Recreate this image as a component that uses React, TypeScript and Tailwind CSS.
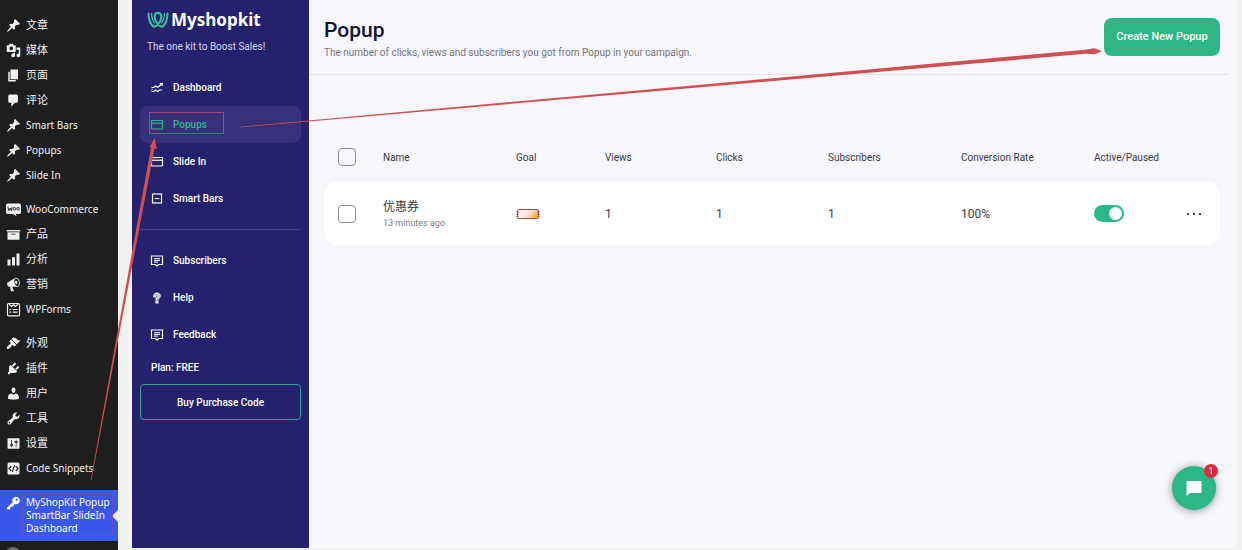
import { useState } from "react";
import type { ReactNode } from "react";
import { LiaQuestionSolid } from "react-icons/lia";

type IconProps = { children: ReactNode; className?: string };

const MenuIcon = ({ children, className = "fill-[#f0f0f1]" }: IconProps) => (
  <svg viewBox="0 0 20 20" className={`size-[15px] shrink-0 ${className}`} aria-hidden="true">
    {children}
  </svg>
);

const pin = (
  <path d="M10.44 3.02l1.82-1.82 6.36 6.35-1.83 1.82c-1.05-.68-2.48-.57-3.41.36l-.75.75c-.92.93-1.04 2.35-.35 3.41l-1.83 1.82-2.41-2.41-2.8 2.79c-.42.42-3.38 2.71-3.8 2.29s1.86-3.39 2.28-3.81l2.79-2.79L4.1 9.36l1.83-1.82c1.05.69 2.48.57 3.4-.36l.75-.75c.93-.92 1.05-2.35.36-3.41z" />
);

// WordPress admin menu, one array per separated group
const adminMenu: { label: string; icon: ReactNode }[][] = [
  [
    { label: "文章", icon: pin },
    {
      label: "媒体",
      icon: (
        <path d="M13 11V4c0-.55-.45-1-1-1h-1.67L9 1H5L3.67 3H2c-.55 0-1 .45-1 1v7c0 .55.45 1 1 1h10c.55 0 1-.45 1-1zM7 4.5c1.38 0 2.5 1.12 2.5 2.5S8.38 9.5 7 9.5 4.5 8.38 4.5 7 5.62 4.5 7 4.5zM14 6h5v10.5c0 1.38-1.12 2.5-2.5 2.5S14 17.88 14 16.5s1.12-2.5 2.5-2.5c.17 0 .34.02.5.05V9h-3V6zm-4 8.05V13h2v3.5c0 1.38-1.12 2.5-2.5 2.5S7 17.88 7 16.5 8.12 14 9.5 14c.17 0 .34.02.5.05z" />
      ),
    },
    { label: "页面", icon: <path d="M6 15V2h10v13H6zm-1 1h8v2H3V5h2v11z" /> },
    {
      label: "评论",
      icon: (
        <path d="M5 2h9c1.1 0 2 .9 2 2v7c0 1.1-.9 2-2 2h-2l-5 5v-5H5c-1.1 0-2-.9-2-2V4c0-1.1.9-2 2-2z" />
      ),
    },
    { label: "Smart Bars", icon: pin },
    { label: "Popups", icon: pin },
    { label: "Slide In", icon: pin },
  ],
  [
    {
      label: "WooCommerce",
      icon: (
        <>
          <path d="M2.5 2h15A2.5 2.5 0 0 1 20 4.5v9a2.5 2.5 0 0 1-2.5 2.5H13l1 3-5-3H2.5A2.5 2.5 0 0 1 0 13.5v-9A2.5 2.5 0 0 1 2.5 2z" />
          <path
            d="M2.5 6.5l1.3 5L5.6 8 7.2 11.5 8.2 6.5"
            fill="none"
            stroke="#1e1e1e"
            strokeWidth="1.2"
          />
          <circle cx="11.2" cy="9" r="1.7" fill="none" stroke="#1e1e1e" strokeWidth="1.2" />
          <circle cx="16" cy="9" r="1.7" fill="none" stroke="#1e1e1e" strokeWidth="1.2" />
        </>
      ),
    },
    { label: "产品", icon: <path d="M19 4v2H1V4h18zM2 7h16v10H2V7zm11 3V9H7v1h6z" /> },
    { label: "分析", icon: <path d="M18 18V2h-4v16h4zm-6 0V7H8v11h4zm-6 0v-8H2v8h4z" /> },
    {
      label: "营销",
      icon: (
        <path d="M18.15 5.94c.46 1.62.38 3.22-.02 4.48-.42 1.28-1.26 2.18-2.3 2.48-.16.06-.26.06-.4.06-.06.02-.12.02-.18.02-.06.02-.14.02-.22.02h-6.8l2.22 5.5c.02.14-.06.26-.14.34-.08.1-.24.16-.34.16H6.95c-.1 0-.26-.06-.34-.16-.08-.08-.16-.2-.14-.34l-1-5.5H4.25l-.02-.02c-.5.06-1.08-.18-1.54-.62s-.88-1.08-1.06-1.88c-.24-.8-.2-1.56-.02-2.2.18-.62.58-1.08 1.06-1.3l.02-.02 9-5.4c.1-.06.18-.1.24-.16.06-.04.14-.08.24-.12.16-.08.28-.12.5-.18 1.04-.3 2.24.1 3.22.98s1.84 2.24 2.26 3.86zm-2.58 5.98h-.02c.4-.1.74-.34 1.04-.7.58-.7.86-1.76.86-3.04 0-.64-.1-1.3-.28-1.98-.34-1.36-1.02-2.5-1.78-3.24s-1.68-1.1-2.46-.88c-.82.22-1.4.96-1.7 2-.32 1.04-.28 2.36.06 3.72.38 1.36 1 2.5 1.8 3.24.78.74 1.62 1.1 2.48.88zm-2.54-7.08c.22-.04.42-.02.62.04.38.16.76.48 1.02 1s.42 1.2.42 1.78c0 .3-.04.56-.12.8-.18.48-.44.84-.86.94-.34.1-.8-.06-1.14-.4s-.64-.86-.78-1.5c-.18-.62-.12-1.24.02-1.72s.48-.84.82-.94z" />
      ),
    },
    {
      label: "WPForms",
      icon: (
        <g fill="none" stroke="#f0f0f1" strokeWidth="1.6">
          <rect x="2" y="2" width="16" height="16.5" rx="1.5" />
          <path d="M4 3l3.5 3L10 3.5 12.5 6 16 3M4.5 10h2.5M9 10h6.5M4.5 13.5h2.5M9 13.5h6.5" />
        </g>
      ),
    },
  ],
  [
    {
      label: "外观",
      icon: (
        <path d="M14.48 11.06L7.41 3.99l1.5-1.5c.5-.56 2.3-.47 3.51.32 1.21.8 1.43 1.28 2.91 2.1 1.18.64 2.45 1.26 4.45.85zm-.71.71L6.7 4.7 4.93 6.47c-.39.39-.39 1.02 0 1.41l1.06 1.06c.39.39.39 1.03 0 1.42-.6.6-1.43 1.11-2.21 1.69-.35.26-.7.53-1.01.84C1.43 14.23.4 16.08 1.4 17.07c.99 1 2.84-.03 4.18-1.36.31-.31.58-.66.85-1.02.57-.78 1.08-1.61 1.69-2.21.39-.39 1.02-.39 1.41 0l1.06 1.06c.39.39 1.02.39 1.41 0z" />
      ),
    },
    {
      label: "插件",
      icon: (
        <path d="M13.11 4.36L9.87 7.6 8 5.73l3.24-3.24c.35-.34 1.05-.2 1.56.32.52.51.66 1.21.31 1.55zm-8 1.77l.91-1.12 9.01 9.01-1.19.84c-.71.71-2.63 1.16-3.82 1.16H6.14L4.9 17.26c-.59.59-1.54.59-2.12 0-.59-.58-.59-1.53 0-2.12l1.24-1.24v-3.88c0-1.13.4-3.19 1.09-3.89zm7.26 3.97l3.24-3.24c.34-.35 1.04-.21 1.55.31.52.51.66 1.21.31 1.55l-3.24 3.25z" />
      ),
    },
    {
      label: "用户",
      icon: (
        <path d="M10 9.25c-2.27 0-2.73-3.44-2.73-3.44C7 4.02 7.82 2 9.97 2c2.16 0 2.98 2.02 2.71 3.81 0 0-.41 3.44-2.68 3.44zm0 2.57L12.72 10c2.39 0 4.52 2.33 4.52 4.53v2.49s-3.65 1.13-7.24 1.13c-3.65 0-7.24-1.13-7.24-1.13v-2.49c0-2.25 1.94-4.48 4.47-4.48z" />
      ),
    },
    {
      label: "工具",
      icon: (
        <path d="M16.68 9.77c-1.34 1.34-3.3 1.67-4.95.99l-5.41 6.52c-.99.99-2.59.99-3.58 0s-.99-2.59 0-3.57l6.52-5.42c-.68-1.65-.35-3.61.99-4.95 1.28-1.28 3.12-1.62 4.72-1.06l-2.89 2.89 2.82 2.82 2.86-2.87c.53 1.58.18 3.39-1.08 4.65zM3.81 16.21c.4.39 1.04.39 1.43 0 .4-.4.4-1.04 0-1.43-.39-.4-1.03-.4-1.43 0-.39.39-.39 1.03 0 1.43z" />
      ),
    },
    {
      label: "设置",
      icon: (
        <path d="M18 16V4c0-.55-.45-1-1-1H3c-.55 0-1 .45-1 1v12c0 .55.45 1 1 1h14c.55 0 1-.45 1-1zM8 11h1c.55 0 1 .45 1 1s-.45 1-1 1H8v1.5c0 .28-.22.5-.5.5s-.5-.22-.5-.5V13H6c-.55 0-1-.45-1-1s.45-1 1-1h1V5.5c0-.28.22-.5.5-.5s.5.22.5.5V11zm5-2h-1c-.55 0-1-.45-1-1s.45-1 1-1h1V5.5c0-.28.22-.5.5-.5s.5.22.5.5V7h1c.55 0 1 .45 1 1s-.45 1-1 1h-1v5.5c0 .28-.22.5-.5.5s-.5-.22-.5-.5V9z" />
      ),
    },
    {
      label: "Code Snippets",
      icon: (
        <>
          <rect x="2" y="2" width="16" height="16" rx="2" />
          <path
            d="M7 7l-3 3 3 3M13 7l3 3-3 3M11.5 5.5l-3 9"
            fill="none"
            stroke="#1e1e1e"
            strokeWidth="1.5"
          />
        </>
      ),
    },
  ],
];

const NavIcon = ({ children }: { children: ReactNode }) => (
  <svg
    viewBox="0 0 14 14"
    className="size-[14px] shrink-0 fill-none stroke-current"
    strokeWidth="1.2"
    aria-hidden="true"
  >
    {children}
  </svg>
);

const windowIcon = (
  <NavIcon>
    <rect x="1.5" y="2.5" width="11" height="8.5" rx="0.5" />
    <path d="M1.5 5.2h11" />
  </NavIcon>
);

const messageIcon = (
  <NavIcon>
    <path d="M1.5 2h11v8.5H8.5L7 12.1 5.5 10.5h-4z" />
    <path d="M4 4.7h6M4 6.4h6M4 8.1h4" strokeWidth="1" />
  </NavIcon>
);

const kitNav = [
  {
    label: "Dashboard",
    icon: (
      <NavIcon>
        <path d="M1.5 6.5h2.5L5.5 5l2 1.2L12 3M9.8 2.6h2.4v2.2M1.5 10.5h2.5L5.5 9l2 1.4 2-1.4h2.7M1.5 8.5h1" />
      </NavIcon>
    ),
  },
  { label: "Popups", icon: windowIcon },
  { label: "Slide In", icon: windowIcon },
  {
    label: "Smart Bars",
    icon: (
      <NavIcon>
        <rect x="2.5" y="2" width="9" height="9" />
        <path d="M4.8 6.5h4.4" />
      </NavIcon>
    ),
  },
];

const supportNav = [
  { label: "Subscribers", icon: messageIcon },
  {
    label: "Help",
    icon: <LiaQuestionSolid className="size-[14px] shrink-0 stroke-current stroke-1" />,
  },
  { label: "Feedback", icon: messageIcon },
];

const campaigns = [
  {
    id: 1,
    name: "优惠券",
    updated: "13 minutes ago",
    views: 1,
    clicks: 1,
    subscribers: 1,
    rate: "100%",
  },
];

const AdminMenu = () => (
  <nav aria-label="WordPress" className="w-[118px] shrink-0 bg-[#1e1e1e] pt-[13px] text-[#f0f0f1]">
    {adminMenu.map((group, i) => (
      <ul key={i} className="mb-[9px]">
        {group.map(({ label, icon }) => (
          <li key={label}>
            <a
              href="#"
              className={`flex h-[25px] items-center gap-[5px] pl-[6px] whitespace-nowrap ${
                /^\w/.test(label) ? "text-[10px]" : "text-[11px]"
              }`}
            >
              <MenuIcon>{icon}</MenuIcon>
              {label}
            </a>
          </li>
        ))}
      </ul>
    ))}
    <a
      href="#"
      aria-current="page"
      className="relative flex gap-[5px] bg-[#3858e9] py-[6px] pl-[6px] text-[10px] leading-[13px] whitespace-nowrap text-white"
    >
      <MenuIcon className="fill-white">
        <path d="M16.95 2.58c1.96 1.95 1.96 5.12 0 7.07-1.51 1.51-3.75 1.84-5.59 1.01l-1.87 3.31-2.99.31L5 18H2l-1-2 7.95-7.69c-.92-1.87-.62-4.18.93-5.73 1.95-1.96 5.12-1.96 7.07 0zm-2.51 3.79c.74 0 1.33-.6 1.33-1.34 0-.73-.59-1.33-1.33-1.33-.73 0-1.33.6-1.33 1.33 0 .74.6 1.34 1.33 1.34z" />
      </MenuIcon>
      <span>
        MyShopKit Popup
        <br />
        SmartBar SlideIn
        <br />
        Dashboard
      </span>
      <span className="absolute top-1/2 right-0 -translate-y-1/2 border-y-[6px] border-r-[6px] border-y-transparent border-r-[#f1f1f1]" />
    </a>
    <div className="mt-[6px] ml-[5px] size-4 rounded-full bg-[#6b6b6b]" />
  </nav>
);

const Logo = () => (
  <svg viewBox="0 0 22 18" className="h-[18px] w-[22px]" aria-hidden="true">
    <g fill="none" stroke="#35c098" strokeLinecap="round" strokeLinejoin="round">
      <path
        d="M1.5 2.5C1.5 8 3.5 14.5 7 15.8c3.5-.6 7.3-6 7.3-10C14.3.5 7.7.5 7.7 5.8c0 4 3.8 9.4 7.3 10 3.5-1.3 5.5-7.8 5.5-13.3"
        strokeWidth="2.1"
      />
      <path d="M4.6 2.5c0 3.5 1 7 2.9 9.3M17.4 2.5c0 3.5-1 7-2.9 9.3" strokeWidth="1.3" />
    </g>
  </svg>
);

const KitSidebar = () => {
  const [active, setActive] = useState("Popups");

  const renderItem = ({ label, icon }: { label: string; icon: ReactNode }) => (
    <li key={label}>
      <a
        href="#"
        onClick={() => setActive(label)}
        className={`flex h-[37px] items-center gap-[9px] rounded-lg pl-[10px] ${
          active === label ? "bg-[#363179] text-[#2cb787]" : "text-white"
        }`}
      >
        {icon}
        {label}
      </a>
    </li>
  );

  return (
    <aside className="mb-[2px] ml-[14px] w-[177px] shrink-0 bg-[#26216c] px-2 pt-[11px] font-['Roboto',sans-serif] text-[10px] font-medium text-white">
      <div className="flex items-center gap-[2px] pl-[7px]">
        <Logo />
        <span className="font-['Noto_Sans',sans-serif] text-[17px] leading-[18px] font-bold">
          Myshopkit
        </span>
      </div>
      <p className="mt-[10px] pl-[7px] leading-4 font-normal text-[#d8d5f5]">
        The one kit to Boost Sales!
      </p>
      <nav aria-label="Myshopkit" className="mt-[14px]">
        <ul>{kitNav.map(renderItem)}</ul>
        <hr className="my-3 border-[#454083]" />
        <ul>{supportNav.map(renderItem)}</ul>
      </nav>
      <p className="mt-[7px] pl-[11px] leading-4">Plan: FREE</p>
      <button
        type="button"
        className="mt-2 h-9 w-full rounded border border-[#2ea39a] text-white"
      >
        Buy Purchase Code
      </button>
    </aside>
  );
};

const CouponIcon = () => (
  <svg viewBox="0 0 24 12" className="h-3 w-6" role="img" aria-label="Coupon">
    <defs>
      <linearGradient id="coupon" x1="0" y1="0" x2="1" y2="0.4">
        <stop offset="0.4" stopColor="#fdeef0" />
        <stop offset="0.7" stopColor="#f9d9c8" />
        <stop offset="0.95" stopColor="#f7b733" />
      </linearGradient>
    </defs>
    <rect x="1.5" y="1.5" width="21" height="9" rx="1" fill="url(#coupon)" stroke="#a34a5e" />
    <path d="M1.5 3v6M22.5 3v6" stroke="#a34a5e" strokeWidth="2" strokeDasharray="1.5 1" />
  </svg>
);

const Check = ({ label }: { label: string }) => (
  <input
    type="checkbox"
    aria-label={label}
    className="block size-[18px] appearance-none rounded border border-[#8d8c98] checked:bg-[#2cb787]"
  />
);

const CampaignTable = () => {
  const [enabled, setEnabled] = useState(true);

  return (
    <table className="mt-[57px] w-full table-fixed border-separate border-spacing-0 text-left text-[#3a3a46]">
      <thead>
        <tr className="h-[50px] text-[10px] [&>th]:font-normal">
          <th className="w-[59px] pl-[14px]">
            <Check label="Select all" />
          </th>
          <th className="w-[133px]">Name</th>
          <th className="w-[89px]">Goal</th>
          <th className="w-[111px]">Views</th>
          <th className="w-[112px]">Clicks</th>
          <th className="w-[133px]">Subscribers</th>
          <th className="w-[133px]">Conversion Rate</th>
          <th className="w-[92px]">Active/Paused</th>
          <th className="w-[34px]" />
        </tr>
      </thead>
      <tbody>
        {campaigns.map((c) => (
          <tr key={c.id} className="h-[63px] text-xs [&>td]:bg-white">
            <td className="rounded-l-xl pl-[14px]">
              <Check label={`Select ${c.name}`} />
            </td>
            <td>
              <span className="block leading-[18px]">{c.name}</span>
              <span className="block text-[9px] leading-[14px] text-[#7b7b86]">{c.updated}</span>
            </td>
            <td>
              <CouponIcon />
            </td>
            <td>{c.views}</td>
            <td>{c.clicks}</td>
            <td>{c.subscribers}</td>
            <td>{c.rate}</td>
            <td>
              <input
                type="checkbox"
                role="switch"
                aria-label="Active"
                checked={enabled}
                onChange={(e) => setEnabled(e.target.checked)}
                className="flex h-[17px] w-[30px] appearance-none items-center rounded-full bg-gray-300 px-[2px] before:size-[13px] before:rounded-full before:bg-white checked:justify-end checked:bg-[#2cb787]"
              />
            </td>
            <td className="rounded-r-xl">
              <button type="button" aria-label="More actions" className="block">
                <svg viewBox="0 0 16 4" className="h-1 w-4 fill-[#1b1b25]">
                  <circle cx="2" cy="2" r="1.1" />
                  <circle cx="8" cy="2" r="1.1" />
                  <circle cx="14" cy="2" r="1.1" />
                </svg>
              </button>
            </td>
          </tr>
        ))}
      </tbody>
    </table>
  );
};

const ChatButton = () => (
  <button
    type="button"
    aria-label="Open chat"
    className="absolute right-[26px] bottom-10 flex size-11 items-center justify-center rounded-full bg-[#2cb787] shadow-[0_1px_8px_rgba(0,0,0,0.4)]"
  >
    <svg viewBox="0 0 16 16" className="size-4 fill-white" aria-hidden="true">
      <path d="M0.5 1h15v12H4l-3.5 3z" />
    </svg>
    <span className="absolute -top-[2px] -right-[2px] flex size-[14px] items-center justify-center rounded-full bg-[#e02b3c] text-[9px] text-white">
      1
    </span>
  </button>
);

// Hand-drawn walkthrough marks laid over the whole screen
const Annotations = () => (
  <svg
    viewBox="0 0 1242 550"
    className="pointer-events-none absolute top-0 left-0 h-[550px] w-[1242px]"
    aria-hidden="true"
  >
    <g fill="#cf4f55">
      <path d="M240 126.7L1085 49.7 1094 48.3 1102 51 1095 54.2 1085.5 53.8 240 127.4z" />
      <path d="M90.7 480L151 147.5 149.5 147 154.5 138 157 149 154.5 148.5 91.4 480z" />
    </g>
    <g fill="none">
      <rect x="149.5" y="112.5" width="74" height="21" stroke="#b0447a" />
      <rect x="22.5" y="494.5" width="90" height="41" stroke="#6a4fc4" />
      <rect x="1112.5" y="22.5" width="100" height="26" stroke="#4aa87f" />
    </g>
  </svg>
);

const App = () => {
  return (
    <div className="relative flex h-screen overflow-hidden bg-[#f1f1f1] font-['Noto_Sans','Noto_Sans_CJK_SC',sans-serif]">
      <AdminMenu />
      <KitSidebar />
      <main className="mr-[5px] mb-[2px] min-w-0 flex-1 bg-[#f6f6fb] font-['Roboto','Noto_Sans_CJK_SC',sans-serif]">
        <header className="mr-2 flex items-start justify-between border-b border-[#e2e2ea] pt-[18px] pr-[9px] pb-[13px] pl-[15px]">
          <div>
            <h1 className="text-[21px] leading-6 font-medium text-[#120f38]">Popup</h1>
            <p className="mt-[3px] text-[10px] leading-4 text-[#777683]">
              The number of clicks, views and subscribers you got from Popup in your campaign.
            </p>
          </div>
          <button
            type="button"
            className="h-[38px] w-[116px] shrink-0 rounded-lg bg-[#2cb787] text-[11px] font-medium text-white"
          >
            Create New Popup
          </button>
        </header>
        <div className="pr-[17px] pl-[15px]">
          <CampaignTable />
        </div>
      </main>
      <ChatButton />
      <Annotations />
    </div>
  );
};

export default App;
